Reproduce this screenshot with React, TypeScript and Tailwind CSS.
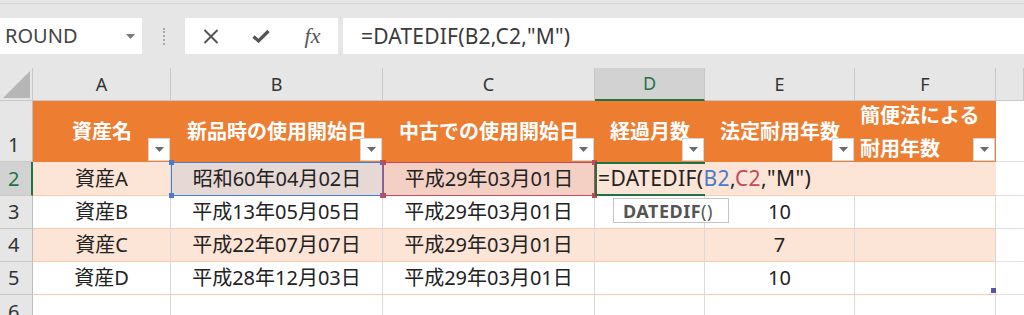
import React from "react";

function Filter() {
  return (
    <div className="absolute right-px bottom-px w-[22px] h-[23px] bg-white border border-[#d6d6d6] flex items-center justify-center">
      <svg width="9" height="5" viewBox="0 0 9 5">
        <polygon points="0,0 9,0 4.5,5" fill="#6b6b6b" />
      </svg>
    </div>
  );
}

function Handles({ color }: { color: string }) {
  const s = { backgroundColor: color };
  return (
    <>
      <div className="absolute -left-[3px] -top-[3px] w-[5px] h-[5px]" style={s} />
      <div className="absolute -right-[3px] -top-[3px] w-[5px] h-[5px]" style={s} />
      <div className="absolute -left-[3px] -bottom-[3px] w-[5px] h-[5px]" style={s} />
      <div className="absolute -right-[3px] -bottom-[3px] w-[5px] h-[5px]" style={s} />
    </>
  );
}

function RowHead({ n, sel, top }: { n: string; sel?: boolean; top?: boolean }) {
  return (
    <div
      className={
        sel
          ? "bg-[#d2d2d2] border-b border-[#c8c8c8] border-r-2 border-r-[#217346] text-[20px] text-[#217346] flex flex-col justify-end overflow-hidden"
          : top
          ? "bg-[#e6e6e6] border-r border-r-[#bdbdbd] text-[20px] text-[#333] flex flex-col justify-start overflow-hidden"
          : "bg-[#e6e6e6] border-b border-[#c8c8c8] border-r border-r-[#bdbdbd] text-[20px] text-[#333] flex flex-col justify-end overflow-hidden"
      }
    >
      <div className="h-[33px] shrink-0 flex items-center pl-[8px]">{n}</div>
    </div>
  );
}

function ColHead({ l, sel }: { l: string; sel?: boolean }) {
  return (
    <div
      className={
        sel
          ? "bg-[#d2d2d2] border-r border-[#c8c8c8] border-b-2 border-b-[#217346] text-[18px] text-[#217346] flex items-center justify-center"
          : "bg-[#e6e6e6] border-r border-[#c8c8c8] border-b border-b-[#c8c8c8] text-[18px] text-[#333] flex items-center justify-center"
      }
    >
      {l}
    </div>
  );
}

function Hdr({ children }: { children: React.ReactNode }) {
  return (
    <div className="relative bg-[#ed7d31] text-white font-bold text-[20px] flex items-center justify-center whitespace-nowrap">
      {children}
      <Filter />
    </div>
  );
}

function C({
  children,
  band,
  last,
}: {
  children?: React.ReactNode;
  band?: boolean;
  last?: boolean;
}) {
  return (
    <div
      className={
        (band ? "bg-[#fce4d6] " : "bg-white ") +
        (last ? "border-r-[#e3d6cf] " : "border-r-[#dadada] ") +
        "border-r border-b border-b-[#f8cbad] text-[20px] text-[#222] flex items-center justify-center whitespace-nowrap"
      }
    >
      {children}
    </div>
  );
}

function G() {
  return <div className="bg-white border-b border-[#e1e1e1]" />;
}

export default function App() {
  return (
    <div className="w-[1024px] h-[315px] overflow-hidden bg-[#e6e6e6] relative font-['Noto_Sans','Noto_Sans_CJK_JP',sans-serif]">
      {/* top strip */}
      <div className="h-[18px] pt-[3px]">
        <div className="h-[15px] border-t border-[#d3d3d3] bg-[#e6e6e6]" />
      </div>
      {/* formula row */}
      <div className="h-[36px] flex">
        <div className="w-[142px] bg-white flex items-center justify-between pl-[5px] pr-[7px]">
          <span className="text-[20px] text-[#444] leading-none">ROUND</span>
          <svg width="9" height="5" viewBox="0 0 9 5">
            <polygon points="0,0 9,0 4.5,5" fill="#7a7a7a" />
          </svg>
        </div>
        <div className="w-[43px] flex items-center justify-center">
          <div className="h-[17px] border-l-[2px] border-dotted border-[#a8a8a8]" />
        </div>
        <div className="w-[153px] bg-white flex items-center">
          <div className="w-[50px] flex justify-center pl-[1px]">
            <svg width="16" height="15" viewBox="0 0 16 15">
              <path d="M1.5 1 L14.5 14 M14.5 1 L1.5 14" stroke="#555" strokeWidth="2" />
            </svg>
          </div>
          <div className="w-[52px] flex justify-center">
            <svg width="18" height="14" viewBox="0 0 18 14">
              <path d="M1.5 7.5 L6.5 12 L16.5 2" stroke="#555" strokeWidth="3.2" fill="none" />
            </svg>
          </div>
          <div className="w-[51px] flex justify-center">
            <span className="font-['Liberation_Serif',serif] italic text-[22px] text-[#555] leading-none">
              fx
            </span>
          </div>
        </div>
        <div className="w-[5px]" />
        <div className="flex-1 bg-white flex items-center pl-[18px]">
          <span className="text-[21px] text-[#3a3a3a] leading-none tracking-[0.2px]">
            =DATEDIF(B2,C2,"M")
          </span>
        </div>
      </div>
      <div className="h-[14px]" />
      {/* sheet */}
      <div className="relative grid grid-cols-[33px_138px_212px_212px_110px_150px_141px_28px] grid-rows-[33px_61px_34px_33px_33px_33px_20px]">
        {/* column headers */}
        <div className="bg-[#e6e6e6] border-r border-b border-[#c8c8c8] flex items-end justify-start pl-[3px] pb-[1px]">
          <svg width="28" height="28" viewBox="0 0 28 28">
            <polygon points="27,0 27,27 0,27" fill="#b6b6b6" />
          </svg>
        </div>
        <ColHead l="A" />
        <ColHead l="B" />
        <ColHead l="C" />
        <ColHead l="D" sel />
        <ColHead l="E" />
        <ColHead l="F" />
        <ColHead l="" />

        {/* row 1 */}
        <RowHead n="1" />
        <Hdr>資産名</Hdr>
        <Hdr>新品時の使用開始日</Hdr>
        <Hdr>中古での使用開始日</Hdr>
        <Hdr>経過月数</Hdr>
        <Hdr>法定耐用年数</Hdr>
        <div className="relative bg-[#ed7d31] text-white font-bold text-[20px] leading-[33px] flex flex-col justify-center pl-[5px] whitespace-nowrap">
          <div>簡便法による</div>
          <div>耐用年数</div>
          <Filter />
        </div>
        <G />

        {/* row 2 */}
        <RowHead n="2" sel />
        <C band>資産A</C>
        <div className="relative bg-[#e6d8d4] border border-[#4a7bc8] text-[20px] text-[#222] flex items-center justify-center whitespace-nowrap">
          昭和60年04月02日
          <Handles color="#4a7bc8" />
        </div>
        <div className="relative bg-[#f4d0c4] border border-[#c24a5a] text-[20px] text-[#222] flex items-center justify-center whitespace-nowrap">
          平成29年03月01日
          <Handles color="#c24a5a" />
        </div>
        <div className="relative z-10 bg-[#fce4d6] border-l-2 border-t-2 border-b-2 border-[#217346] text-[21px] text-[#222] flex items-center pl-px whitespace-nowrap overflow-visible tracking-[0.4px]">
          <span>
            =DATEDIF(<span className="text-[#4a7bc8]">B2</span>,
            <span className="text-[#c24a5a]">C2</span>,"M")
          </span>
        </div>
        <div className="bg-[#fce4d6] border-b border-[#f8cbad]" />
        <div className="bg-[#fce4d6] border-b border-[#f8cbad]" />
        <G />

        {/* row 3 */}
        <RowHead n="3" />
        <C>資産B</C>
        <C>平成13年05月05日</C>
        <C>平成29年03月01日</C>
        <C />
        <C>10</C>
        <C last />
        <G />

        {/* row 4 */}
        <RowHead n="4" />
        <C band>資産C</C>
        <C band>平成22年07月07日</C>
        <C band>平成29年03月01日</C>
        <C band />
        <C band>7</C>
        <C band last />
        <G />

        {/* row 5 */}
        <RowHead n="5" />
        <C>資産D</C>
        <C>平成28年12月03日</C>
        <C>平成29年03月01日</C>
        <C />
        <C>10</C>
        <div className="relative bg-white border-r border-b border-r-[#e3d6cf] border-b-[#f8cbad]">
          <svg className="absolute right-[-1px] bottom-[1px]" width="5" height="5" viewBox="0 0 5 5">
            <rect x="0" y="0" width="5" height="5" fill="#5b55a8" />
          </svg>
        </div>
        <G />

        {/* row 6 */}
        <RowHead n="6" top />
        <div className="bg-white border-r border-[#dadada]" />
        <div className="bg-white border-r border-[#dadada]" />
        <div className="bg-white border-r border-[#dadada]" />
        <div className="bg-white border-r border-[#dadada]" />
        <div className="bg-white border-r border-[#dadada]" />
        <div className="bg-white border-r border-[#dadada]" />
        <div className="bg-white" />

        {/* tooltip */}
        <div className="absolute z-20 left-[613px] top-[130px] w-[116px] h-[25px] bg-white border border-[#c4c4c4] flex items-center pl-[9px] text-[18px] text-[#555] leading-none tracking-[0.5px]">
          <span className="font-bold">DATEDIF</span>
          <span>()</span>
        </div>
      </div>
    </div>
  );
}
